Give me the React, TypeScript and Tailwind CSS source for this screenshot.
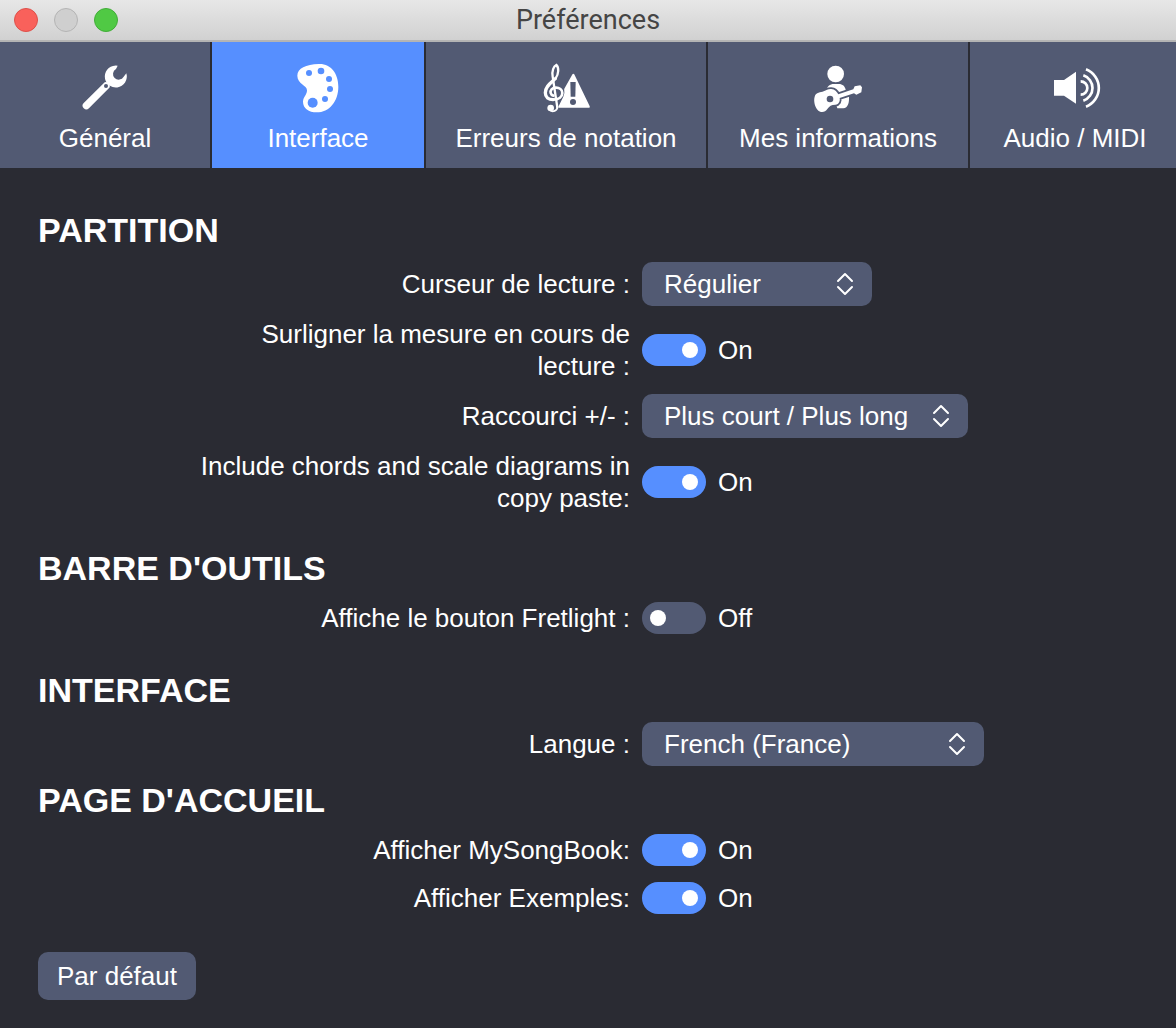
import { useId, useState } from "react";
import type { ReactNode } from "react";

const ICON = "block size-12 overflow-visible";

function WrenchIcon() {
  return (
    <svg viewBox="63 42 144 144" className={ICON} fill="currentColor" aria-hidden="true">
      <path d="M79 167 L138 108" stroke="currentColor" strokeWidth="22" strokeLinecap="round" />
      <path d="M173 47 A33 33 0 1 0 199 70 L191 80 A17 17 0 1 1 168 57 Z" />
      <circle cx="138" cy="108" r="6" className="fill-[#525a73]" />
    </svg>
  );
}

function PaletteIcon() {
  return (
    <svg viewBox="102 42 144 144" className={ICON} fill="currentColor" aria-hidden="true">
      <path d="M176 42 C212 40 235 70 235 110 C235 154 208 187 170 187 C146 187 129 175 129 155 C129 141 141 135 141 121 C141 105 112 102 112 77 C112 55 138 43 176 42 Z" />
      <g className="fill-[#568fff]">
        <circle cx="147" cy="69" r="9" />
        <circle cx="183" cy="63" r="10" />
        <circle cx="207" cy="87" r="9" />
        <circle cx="210" cy="117" r="9" />
        <circle cx="195" cy="147" r="9" />
        <circle cx="158" cy="158" r="15" />
      </g>
    </svg>
  );
}

function NotationIcon() {
  return (
    <svg viewBox="66 42 144 144" className={ICON} fill="currentColor" aria-hidden="true">
      <g fill="none" stroke="currentColor" strokeLinecap="round">
        <path d="M112 172 L98 80 C95 62 101 49 109 45 C117 52 117 72 106 86" strokeWidth="7" />
        <path d="M106 86 C94 98 76 108 76 128 C76 142 86 149 99 149" strokeWidth="10" />
        <path d="M99 149 C117 149 127 140 127 129 C127 118 118 113 108 113 C96 113 90 121 92 129 C93 133 96 136 100 137" strokeWidth="8" />
        <path d="M112 168 C113 178 107 184 98 184 C92 184 87 180 87 175" strokeWidth="5" />
      </g>
      <circle cx="92" cy="174" r="10" />
      <path d="M160 75 L206 170 L119 170 L133 142 C138 133 137 123 136 118 Z" stroke="currentColor" strokeWidth="7" strokeLinejoin="round" />
      <g className="fill-[#525a73]">
        <path d="M151 96 H167 L166 140 H152 Z" />
        <circle cx="159" cy="156" r="9" />
      </g>
    </svg>
  );
}

function GuitaristIcon() {
  return (
    <svg viewBox="72 42 144 144" className={ICON} fill="currentColor" aria-hidden="true">
      <circle cx="137" cy="72" r="25" />
      <path d="M109 124 C111 108 119 102 132 102 H146 C158 102 165 108 168 122 L177 140 C178 158 174 173 160 175 H142 L130 140 Z" />
      <path
        d="M74 140 C78 126 92 128 101 124 C110 121 114 116 124 117 C134 118 141 125 145 133 L190 118 L194 109 L211 106 L216 112 L214 127 L199 134 L192 130 L149 144 C151 153 147 163 136 164 C124 164 118 168 112 177 C106 187 92 190 83 180 C75 171 70 153 74 140 Z"
        className="stroke-[#525a73]"
        strokeWidth="11"
        strokeLinejoin="round"
        paintOrder="stroke"
      />
      <circle cx="120" cy="147" r="10" className="fill-[#525a73]" />
    </svg>
  );
}

function SpeakerIcon() {
  return (
    <svg viewBox="93 42 144 144" className={ICON} fill="currentColor" aria-hidden="true">
      <path d="M102 90 H132 L168 65 V161 L132 137 H102 Z" />
      <g fill="none" stroke="currentColor" strokeWidth="8">
        <path d="M182 94 A20 20 0 0 1 182 134" />
        <path d="M190 76 A40 40 0 0 1 190 152" />
        <path d="M198 58 A60 60 0 0 1 198 170" />
      </g>
    </svg>
  );
}

const TABS = [
  { id: "general", label: "Général", icon: <WrenchIcon /> },
  { id: "interface", label: "Interface", icon: <PaletteIcon /> },
  { id: "notation", label: "Erreurs de notation", icon: <NotationIcon /> },
  { id: "infos", label: "Mes informations", icon: <GuitaristIcon /> },
  { id: "audio", label: "Audio / MIDI", icon: <SpeakerIcon /> },
];

function TitleBar() {
  return (
    <header className="grid h-[42px] grid-cols-[1fr_auto_1fr] items-center border-b-2 border-[#b4b4b4] bg-linear-to-b from-[#e7e7e7] to-[#d1d1d1] px-[14px]">
      <div className="flex gap-4">
        <button aria-label="Fermer" className="size-6 rounded-full border border-[#dd504a] bg-[#f9615b]" />
        <button aria-label="Réduire" className="size-6 rounded-full border border-[#b4b4b4] bg-[#cfcfcf]" />
        <button aria-label="Agrandir" className="size-6 rounded-full border border-[#41ad38] bg-[#50c944]" />
      </div>
      <h1 className="font-['Roboto',sans-serif] text-[27px] leading-8 text-[#454545]">Préférences</h1>
    </header>
  );
}

function Section({ title, className, children }: { title: string; className?: string; children: ReactNode }) {
  return (
    <section className={className}>
      <h2 className="text-[34px] leading-[44px] font-bold">{title}</h2>
      <div className="mt-[10px] flex flex-col gap-3">{children}</div>
    </section>
  );
}

function Row({ id, label, children }: { id: string; label: string; children: ReactNode }) {
  return (
    <div className="grid min-h-9 grid-cols-[37fr_31fr] items-center gap-3">
      <label htmlFor={id} className="max-w-[448px] justify-self-end text-right">
        {label}
      </label>
      <div className="flex items-center gap-3">{children}</div>
    </div>
  );
}

function SelectRow({ label, options, width }: { label: string; options: string[]; width: string }) {
  const id = useId();
  return (
    <Row id={id} label={label}>
      <div className={`relative ${width}`}>
        <select id={id} className="block h-11 w-full appearance-none rounded-[10px] bg-[#525a73] pr-12 pl-[22px]">
          {options.map((o) => (
            <option key={o}>{o}</option>
          ))}
        </select>
        <svg
          viewBox="0 0 18 24"
          className="pointer-events-none absolute top-[10px] right-[18px] h-6 w-[18px]"
          fill="none"
          stroke="currentColor"
          strokeWidth="2"
          strokeLinecap="round"
          strokeLinejoin="round"
          aria-hidden="true"
        >
          <path d="M2 9 L9 2 L16 9 M2 15 L9 22 L16 15" />
        </svg>
      </div>
    </Row>
  );
}

function ToggleRow({ label, initial }: { label: string; initial: boolean }) {
  const id = useId();
  const [on, setOn] = useState(initial);
  return (
    <Row id={id} label={label}>
      <input
        id={id}
        type="checkbox"
        role="switch"
        checked={on}
        onChange={(e) => setOn(e.target.checked)}
        className="flex h-8 w-16 appearance-none items-center rounded-full bg-[#525a73] px-2 before:size-4 before:rounded-full before:bg-white checked:justify-end checked:bg-[#568fff]"
      />
      <span>{on ? "On" : "Off"}</span>
    </Row>
  );
}

export default function App() {
  const [tab, setTab] = useState("interface");

  return (
    <div className="min-h-screen bg-[#2a2b33] font-['Liberation_Sans',Arial,sans-serif] text-[26px] leading-8 text-white">
      <TitleBar />

      <nav className="grid grid-cols-[105fr_106fr_140fr_130fr_103fr] gap-[2px]">
        {TABS.map((t) => (
          <button
            key={t.id}
            onClick={() => setTab(t.id)}
            aria-pressed={t.id === tab}
            className={`flex flex-col items-center gap-[10px] pt-[22px] pb-[14px] whitespace-nowrap last:pl-1 ${
              t.id === tab ? "bg-[#568fff]" : "bg-[#525a73]"
            }`}
          >
            {t.icon}
            <span>{t.label}</span>
          </button>
        ))}
      </nav>

      <main className="px-[38px] pt-10 pb-7">
        <Section title="PARTITION">
          <SelectRow label="Curseur de lecture :" options={["Régulier"]} width="w-[230px]" />
          <ToggleRow label="Surligner la mesure en cours de lecture :" initial={true} />
          <SelectRow label="Raccourci +/- :" options={["Plus court / Plus long"]} width="w-[326px]" />
          <ToggleRow label="Include chords and scale diagrams in copy paste:" initial={true} />
        </Section>

        <Section title="BARRE D'OUTILS" className="mt-8">
          <ToggleRow label="Affiche le bouton Fretlight :" initial={false} />
        </Section>

        <Section title="INTERFACE" className="mt-8">
          <SelectRow label="Langue :" options={["French (France)"]} width="w-[342px]" />
        </Section>

        <Section title="PAGE D'ACCUEIL" className="mt-3">
          <ToggleRow label="Afficher MySongBook:" initial={true} />
          <ToggleRow label="Afficher Exemples:" initial={true} />
        </Section>

        <button className="mt-9 h-12 rounded-[10px] bg-[#525a73] px-[19px]">Par défaut</button>
      </main>
    </div>
  );
}
